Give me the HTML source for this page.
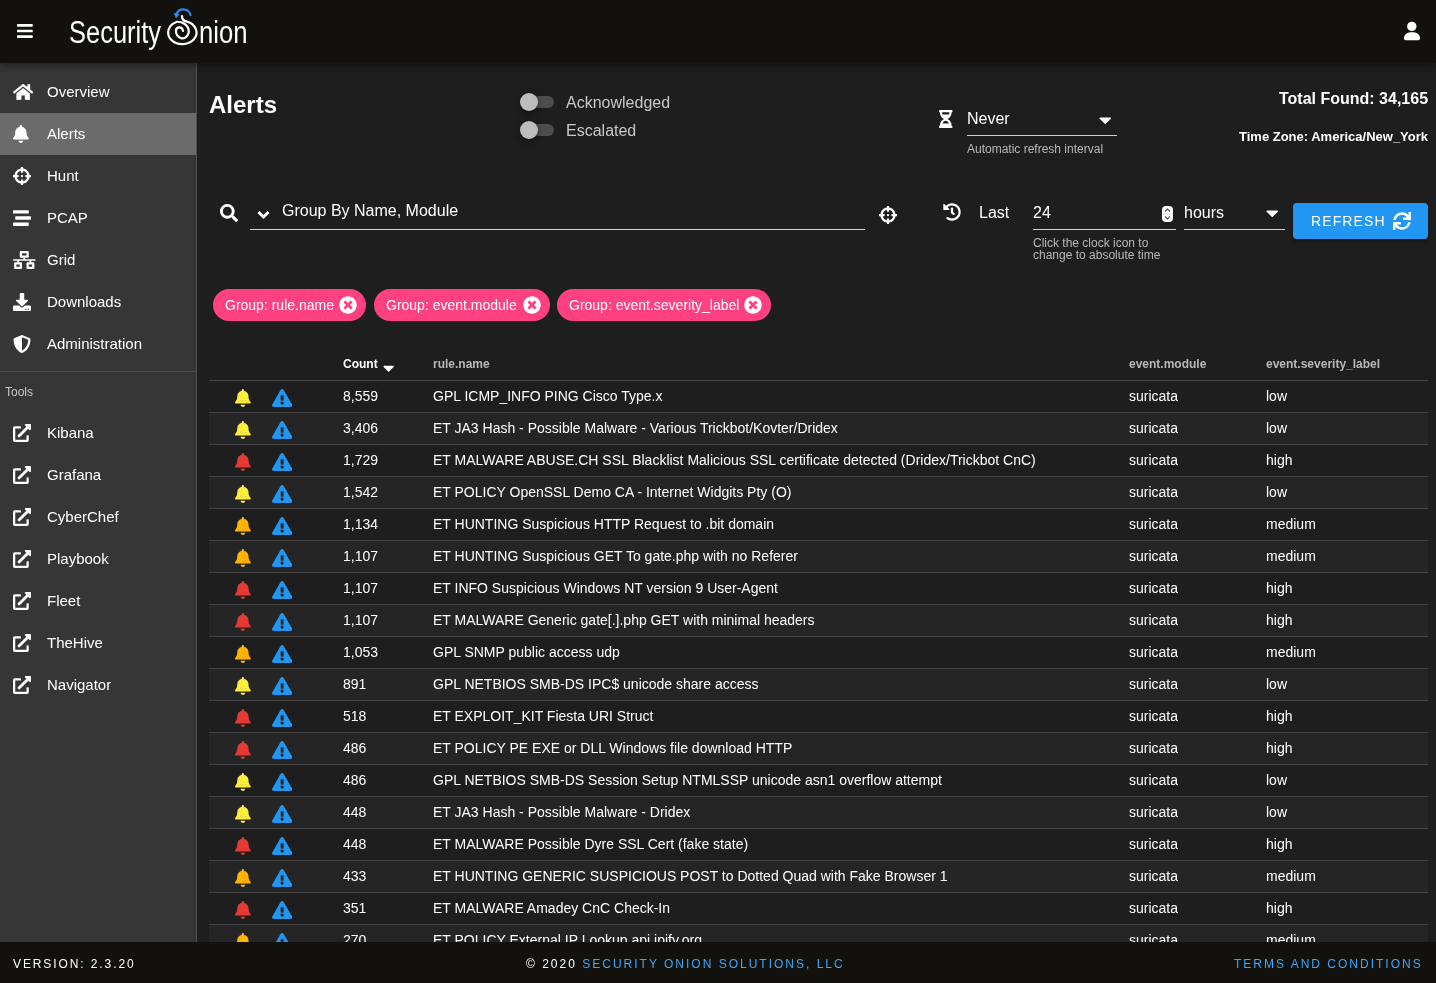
<!DOCTYPE html><html><head><meta charset="utf-8"><style>
*{box-sizing:border-box;margin:0;padding:0}
html,body{-webkit-font-smoothing:antialiased;width:1436px;height:983px;overflow:hidden;background:#1e1e1e;font-family:"Liberation Sans",sans-serif;color:#fff}
.t{position:absolute;white-space:nowrap;line-height:1;will-change:transform}
.ic{position:absolute;display:block;will-change:transform}
.bx{position:absolute}
</style></head><body>
<div class="bx" style="left:0;top:63px;width:196px;height:879px;background:#363636"></div>
<div class="bx" style="left:196px;top:63px;width:1px;height:879px;background:#4f4f4f"></div>
<div class="bx" style="left:0;top:113px;width:196px;height:42px;background:#6b6b6b"></div>
<div class="t" style="left:47px;top:84px;font-size:15px;color:#fff;font-weight:400;">Overview</div>
<svg class="ic" style="left:13px;top:83px;width:20.25px;height:18px;fill:#fff" viewBox="0 0 576 512" preserveAspectRatio="none"><path d="M280.37 148.26L96 300.11V464a16 16 0 0 0 16 16l112.06-.29a16 16 0 0 0 15.92-16V368a16 16 0 0 1 16-16h64a16 16 0 0 1 16 16v95.64a16 16 0 0 0 16 16.05L464 480a16 16 0 0 0 16-16V300L295.67 148.26a12.19 12.19 0 0 0-15.3 0zM571.6 251.47L488 182.56V44.05a12 12 0 0 0-12-12h-56a12 12 0 0 0-12 12v72.61L318.47 43a48 48 0 0 0-61 0L4.34 251.47a12 12 0 0 0-1.6 16.9l25.5 31A12 12 0 0 0 45.15 301l235.22-193.74a12.19 12.19 0 0 1 15.3 0L530.9 301a12 12 0 0 0 16.9-1.6l25.5-31a12 12 0 0 0-1.7-16.93z"/></svg>
<div class="t" style="left:47px;top:126px;font-size:15px;color:#fff;font-weight:400;">Alerts</div>
<svg class="ic" style="left:13px;top:125px;width:15.75px;height:18px;fill:#fff" viewBox="0 0 448 512" preserveAspectRatio="none"><path d="M224 512c35.32 0 63.97-28.65 63.97-64H160.03c0 35.35 28.65 64 63.97 64zm215.39-149.71c-19.32-20.76-55.47-51.99-55.47-154.29 0-77.7-54.48-139.9-127.94-155.16V32c0-17.67-14.32-32-31.98-32s-31.98 14.33-31.98 32v20.84C118.56 68.1 64.08 130.3 64.08 208c0 102.3-36.15 133.53-55.47 154.29-6 6.45-8.66 14.16-8.61 21.71.11 16.4 12.98 32 32.1 32h383.8c19.12 0 32-15.6 32.1-32 .05-7.55-2.61-15.27-8.61-21.71z"/></svg>
<div class="t" style="left:47px;top:168px;font-size:15px;color:#fff;font-weight:400;">Hunt</div>
<svg class="ic" style="left:13px;top:167px;width:18.00px;height:18px;fill:#fff" viewBox="0 0 512 512" preserveAspectRatio="none"><path d="M500 224h-30.364C455.724 130.325 381.675 56.276 288 42.364V12c0-6.627-5.373-12-12-12h-40c-6.627 0-12 5.373-12 12v30.364C130.325 56.276 56.276 130.325 42.364 224H12c-6.627 0-12 5.373-12 12v40c0 6.627 5.373 12 12 12h30.364C56.276 381.675 130.325 455.724 224 469.636V500c0 6.627 5.373 12 12 12h40c6.627 0 12-5.373 12-12v-30.364C381.675 455.724 455.724 381.675 469.636 288H500c6.627 0 12-5.373 12-12v-40c0-6.627-5.373-12-12-12zM288 404.634V364c0-6.627-5.373-12-12-12h-40c-6.627 0-12 5.373-12 12v40.634C165.826 392.232 119.783 346.243 107.366 288H148c6.627 0 12-5.373 12-12v-40c0-6.627-5.373-12-12-12h-40.634C119.768 165.826 165.757 119.783 224 107.366V148c0 6.627 5.373 12 12 12h40c6.627 0 12-5.373 12-12v-40.634C346.174 119.768 392.217 165.757 404.634 224H364c-6.627 0-12 5.373-12 12v40c0 6.627 5.373 12 12 12h40.634C392.232 346.174 346.243 392.217 288 404.634zM288 256c0 17.673-14.327 32-32 32s-32-14.327-32-32c0-17.673 14.327-32 32-32s32 14.327 32 32z"/></svg>
<div class="t" style="left:47px;top:210px;font-size:15px;color:#fff;font-weight:400;">PCAP</div>
<svg class="ic" style="left:13px;top:209px;width:18.00px;height:18px;fill:#fff" viewBox="0 0 512 512" preserveAspectRatio="none"><path d="M16 128h416c8.84 0 16-7.16 16-16V48c0-8.84-7.16-16-16-16H16C7.16 32 0 39.16 0 48v64c0 8.84 7.16 16 16 16zm480 80H80c-8.84 0-16 7.16-16 16v64c0 8.84 7.16 16 16 16h416c8.84 0 16-7.16 16-16v-64c0-8.840-7.16-16-16-16zm-64 176H16c-8.84 0-16 7.16-16 16v64c0 8.84 7.16 16 16 16h416c8.84 0 16-7.16 16-16v-64c0-8.84-7.16-16-16-16z"/></svg>
<div class="t" style="left:47px;top:252px;font-size:15px;color:#fff;font-weight:400;">Grid</div>
<svg class="ic" style="left:13px;top:251px;width:22.50px;height:18px;fill:#fff" viewBox="0 0 640 512" preserveAspectRatio="none"><path d="M640 264v-16c0-8.84-7.16-16-16-16H344v-40h72c17.67 0 32-14.33 32-32V32c0-17.67-14.33-32-32-32H224c-17.67 0-32 14.33-32 32v128c0 17.67 14.33 32 32 32h72v40H16c-8.84 0-16 7.16-16 16v16c0 8.84 7.16 16 16 16h104v40H64c-17.67 0-32 14.33-32 32v128c0 17.67 14.33 32 32 32h160c17.67 0 32-14.33 32-32V352c0-17.67-14.33-32-32-32h-56v-40h304v40h-56c-17.67 0-32 14.33-32 32v128c0 17.67 14.33 32 32 32h160c17.67 0 32-14.33 32-32V352c0-17.67-14.33-32-32-32h-56v-40h104c8.84 0 16-7.16 16-16zM256 128V64h128v64H256zm-64 320H96v-64h96v64zm352 0h-96v-64h96v64z"/></svg>
<div class="t" style="left:47px;top:294px;font-size:15px;color:#fff;font-weight:400;">Downloads</div>
<svg class="ic" style="left:13px;top:293px;width:18.00px;height:18px;fill:#fff" viewBox="0 0 512 512" preserveAspectRatio="none"><path d="M216 0h80c13.3 0 24 10.7 24 24v168h87.7c17.8 0 26.7 21.5 14.1 34.1L269.7 378.3c-7.5 7.5-19.8 7.5-27.3 0L90.1 226.1c-12.6-12.6-3.7-34.1 14.1-34.1H192V24c0-13.3 10.7-24 24-24zm296 376v112c0 13.3-10.7 24-24 24H24c-13.3 0-24-10.7-24-24V376c0-13.3 10.7-24 24-24h146.7l49 49c20.1 20.1 52.5 20.1 72.6 0l49-49H488c13.3 0 24 10.7 24 24zm-124 88c0-11-9-20-20-20s-20 9-20 20 9 20 20 20 20-9 20-20zm64 0c0-11-9-20-20-20s-20 9-20 20 9 20 20 20 20-9 20-20z"/></svg>
<div class="t" style="left:47px;top:336px;font-size:15px;color:#fff;font-weight:400;">Administration</div>
<svg class="ic" style="left:13px;top:335px;width:18.00px;height:18px;fill:#fff" viewBox="0 0 512 512" preserveAspectRatio="none"><path d="M466.5 83.7l-192-80a48.15 48.15 0 0 0-36.9 0l-192 80C27.7 91.1 16 108.6 16 128c0 198.5 114.5 335.7 221.5 380.3 11.8 4.9 25.1 4.9 36.9 0C360.1 472.6 496 349.3 496 128c0-19.4-11.7-36.9-29.5-44.3zM256.1 446.3l-.1-381 175.9 73.3c-3.3 151.4-82.1 261.1-175.8 307.7z"/></svg>
<div class="bx" style="left:0;top:371px;width:196px;height:1px;background:#4f4f4f"></div>
<div class="t" style="left:5px;top:386px;font-size:12px;color:#c8c8c8;font-weight:400;">Tools</div>
<div class="t" style="left:47px;top:425px;font-size:15px;color:#fff;font-weight:400;">Kibana</div>
<svg class="ic" style="left:13px;top:424px;width:18.00px;height:18px;fill:#fff" viewBox="0 0 512 512" preserveAspectRatio="none"><path d="M432 320h-32a16 16 0 0 0-16 16v112H64V128h144a16 16 0 0 0 16-16V80a16 16 0 0 0-16-16H48a48 48 0 0 0-48 48v352a48 48 0 0 0 48 48h352a48 48 0 0 0 48-48V336a16 16 0 0 0-16-16zM488 0H360c-21.37 0-32.05 25.91-17 41l35.73 35.73L135 320.37a24 24 0 0 0 0 34L157.670 377a24 24 0 0 0 34 0l243.610-243.680L471 169c15 15 41 4.5 41-17V24a24 24 0 0 0-24-24z"/></svg>
<div class="t" style="left:47px;top:467px;font-size:15px;color:#fff;font-weight:400;">Grafana</div>
<svg class="ic" style="left:13px;top:466px;width:18.00px;height:18px;fill:#fff" viewBox="0 0 512 512" preserveAspectRatio="none"><path d="M432 320h-32a16 16 0 0 0-16 16v112H64V128h144a16 16 0 0 0 16-16V80a16 16 0 0 0-16-16H48a48 48 0 0 0-48 48v352a48 48 0 0 0 48 48h352a48 48 0 0 0 48-48V336a16 16 0 0 0-16-16zM488 0H360c-21.37 0-32.05 25.91-17 41l35.73 35.73L135 320.37a24 24 0 0 0 0 34L157.670 377a24 24 0 0 0 34 0l243.610-243.680L471 169c15 15 41 4.5 41-17V24a24 24 0 0 0-24-24z"/></svg>
<div class="t" style="left:47px;top:509px;font-size:15px;color:#fff;font-weight:400;">CyberChef</div>
<svg class="ic" style="left:13px;top:508px;width:18.00px;height:18px;fill:#fff" viewBox="0 0 512 512" preserveAspectRatio="none"><path d="M432 320h-32a16 16 0 0 0-16 16v112H64V128h144a16 16 0 0 0 16-16V80a16 16 0 0 0-16-16H48a48 48 0 0 0-48 48v352a48 48 0 0 0 48 48h352a48 48 0 0 0 48-48V336a16 16 0 0 0-16-16zM488 0H360c-21.37 0-32.05 25.91-17 41l35.73 35.73L135 320.37a24 24 0 0 0 0 34L157.670 377a24 24 0 0 0 34 0l243.610-243.680L471 169c15 15 41 4.5 41-17V24a24 24 0 0 0-24-24z"/></svg>
<div class="t" style="left:47px;top:551px;font-size:15px;color:#fff;font-weight:400;">Playbook</div>
<svg class="ic" style="left:13px;top:550px;width:18.00px;height:18px;fill:#fff" viewBox="0 0 512 512" preserveAspectRatio="none"><path d="M432 320h-32a16 16 0 0 0-16 16v112H64V128h144a16 16 0 0 0 16-16V80a16 16 0 0 0-16-16H48a48 48 0 0 0-48 48v352a48 48 0 0 0 48 48h352a48 48 0 0 0 48-48V336a16 16 0 0 0-16-16zM488 0H360c-21.37 0-32.05 25.91-17 41l35.73 35.73L135 320.37a24 24 0 0 0 0 34L157.670 377a24 24 0 0 0 34 0l243.610-243.680L471 169c15 15 41 4.5 41-17V24a24 24 0 0 0-24-24z"/></svg>
<div class="t" style="left:47px;top:593px;font-size:15px;color:#fff;font-weight:400;">Fleet</div>
<svg class="ic" style="left:13px;top:592px;width:18.00px;height:18px;fill:#fff" viewBox="0 0 512 512" preserveAspectRatio="none"><path d="M432 320h-32a16 16 0 0 0-16 16v112H64V128h144a16 16 0 0 0 16-16V80a16 16 0 0 0-16-16H48a48 48 0 0 0-48 48v352a48 48 0 0 0 48 48h352a48 48 0 0 0 48-48V336a16 16 0 0 0-16-16zM488 0H360c-21.37 0-32.05 25.91-17 41l35.73 35.73L135 320.37a24 24 0 0 0 0 34L157.670 377a24 24 0 0 0 34 0l243.610-243.680L471 169c15 15 41 4.5 41-17V24a24 24 0 0 0-24-24z"/></svg>
<div class="t" style="left:47px;top:635px;font-size:15px;color:#fff;font-weight:400;">TheHive</div>
<svg class="ic" style="left:13px;top:634px;width:18.00px;height:18px;fill:#fff" viewBox="0 0 512 512" preserveAspectRatio="none"><path d="M432 320h-32a16 16 0 0 0-16 16v112H64V128h144a16 16 0 0 0 16-16V80a16 16 0 0 0-16-16H48a48 48 0 0 0-48 48v352a48 48 0 0 0 48 48h352a48 48 0 0 0 48-48V336a16 16 0 0 0-16-16zM488 0H360c-21.37 0-32.05 25.91-17 41l35.73 35.73L135 320.37a24 24 0 0 0 0 34L157.670 377a24 24 0 0 0 34 0l243.610-243.680L471 169c15 15 41 4.5 41-17V24a24 24 0 0 0-24-24z"/></svg>
<div class="t" style="left:47px;top:677px;font-size:15px;color:#fff;font-weight:400;">Navigator</div>
<svg class="ic" style="left:13px;top:676px;width:18.00px;height:18px;fill:#fff" viewBox="0 0 512 512" preserveAspectRatio="none"><path d="M432 320h-32a16 16 0 0 0-16 16v112H64V128h144a16 16 0 0 0 16-16V80a16 16 0 0 0-16-16H48a48 48 0 0 0-48 48v352a48 48 0 0 0 48 48h352a48 48 0 0 0 48-48V336a16 16 0 0 0-16-16zM488 0H360c-21.37 0-32.05 25.91-17 41l35.73 35.73L135 320.37a24 24 0 0 0 0 34L157.670 377a24 24 0 0 0 34 0l243.610-243.680L471 169c15 15 41 4.5 41-17V24a24 24 0 0 0-24-24z"/></svg>
<div class="t" style="left:209px;top:93px;font-size:24px;color:#fff;font-weight:700;">Alerts</div>
<div class="bx" style="left:521px;top:96px;width:33px;height:12px;border-radius:6px;background:#4d4d4d"></div>
<div class="bx" style="left:520px;top:93px;width:18px;height:18px;border-radius:50%;background:#bdbdbd;box-shadow:0 2px 4px -1px rgba(0,0,0,.2),0 4px 5px 0 rgba(0,0,0,.14),0 1px 10px 0 rgba(0,0,0,.12)"></div>
<div class="t" style="left:566px;top:95px;font-size:16px;color:#c8c8c8;font-weight:400;">Acknowledged</div>
<div class="bx" style="left:521px;top:124px;width:33px;height:12px;border-radius:6px;background:#4d4d4d"></div>
<div class="bx" style="left:520px;top:121px;width:18px;height:18px;border-radius:50%;background:#bdbdbd;box-shadow:0 2px 4px -1px rgba(0,0,0,.2),0 4px 5px 0 rgba(0,0,0,.14),0 1px 10px 0 rgba(0,0,0,.12)"></div>
<div class="t" style="left:566px;top:123px;font-size:16px;color:#c8c8c8;font-weight:400;">Escalated</div>
<svg class="ic" style="left:939px;top:110px;width:13.50px;height:18px;fill:#fff" viewBox="0 0 384 512" preserveAspectRatio="none"><path d="M360 0H24C10.745 0 0 10.745 0 24v16c0 13.255 10.745 24 24 24 0 90.965 51.016 167.734 120.842 192C75.016 280.266 24 357.035 24 448c-13.255 0-24 10.745-24 24v16c0 13.255 10.745 24 24 24h336c13.255 0 24-10.745 24-24v-16c0-13.255-10.745-24-24-24 0-90.965-51.016-167.734-120.842-192C308.984 231.734 360 154.965 360 64c13.255 0 24-10.745 24-24V24c0-13.255-10.745-24-24-24zm-75.078 384H99.08c17.059-46.797 52.096-80 92.92-80 40.821 0 75.862 33.196 92.922 80zm.019-256H99.078C91.988 108.548 88 86.748 88 64h208c0 22.805-3.987 44.587-11.059 64z"/></svg>
<div class="t" style="left:967px;top:111px;font-size:16px;color:#fff;font-weight:400;">Never</div>
<svg class="ic" style="left:1099px;top:109.5px;width:12.50px;height:20px;fill:#fff" viewBox="0 0 320 512" preserveAspectRatio="none"><path d="M31.3 192h257.3c17.8 0 26.7 21.5 14.1 34.1L174.1 354.8c-7.8 7.8-20.5 7.8-28.3 0L17.2 226.1C4.6 213.5 13.5 192 31.3 192z"/></svg>
<div class="bx" style="left:967px;top:135px;width:150px;height:1px;background:#d0d0d0"></div>
<div class="t" style="left:967px;top:143px;font-size:12px;color:#b8b8b8;font-weight:400;">Automatic refresh interval</div>
<div class="t" style="right:8px;top:91px;font-size:16px;font-weight:700;color:#fff">Total Found: 34,165</div>
<div class="t" style="right:8px;top:130px;font-size:13px;font-weight:700;color:#fff">Time Zone: America/New_York</div>
<svg class="ic" style="left:220px;top:204px;width:18.00px;height:18px;fill:#fff" viewBox="0 0 512 512" preserveAspectRatio="none"><path d="M505 442.7L405.3 343c-4.5-4.5-10.6-7-17-7H372c27.6-35.3 44-79.7 44-128C416 93.1 322.9 0 208 0S0 93.1 0 208s93.1 208 208 208c48.3 0 92.7-16.4 128-44v16.3c0 6.4 2.5 12.5 7 17l99.7 99.7c9.4 9.4 24.6 9.4 33.9 0l28.3-28.3c9.4-9.4 9.4-24.6.1-34zM208 336c-70.7 0-128-57.2-128-128 0-70.7 57.2-128 128-128 70.7 0 128 57.2 128 128 0 70.7-57.2 128-128 128z"/></svg>
<svg class="ic" style="left:257px;top:210px;width:13px;height:10px" viewBox="0 0 13 10"><path d="M1.5 2 L6.5 7 L11.5 2" stroke="#fff" stroke-width="3" fill="none"/></svg>
<div class="t" style="left:282px;top:203px;font-size:16px;color:#fff;font-weight:400;">Group By Name, Module</div>
<div class="bx" style="left:250px;top:229px;width:615px;height:1px;background:#d0d0d0"></div>
<svg class="ic" style="left:879px;top:206px;width:18.00px;height:18px;fill:#fff" viewBox="0 0 512 512" preserveAspectRatio="none"><path d="M500 224h-30.364C455.724 130.325 381.675 56.276 288 42.364V12c0-6.627-5.373-12-12-12h-40c-6.627 0-12 5.373-12 12v30.364C130.325 56.276 56.276 130.325 42.364 224H12c-6.627 0-12 5.373-12 12v40c0 6.627 5.373 12 12 12h30.364C56.276 381.675 130.325 455.724 224 469.636V500c0 6.627 5.373 12 12 12h40c6.627 0 12-5.373 12-12v-30.364C381.675 455.724 455.724 381.675 469.636 288H500c6.627 0 12-5.373 12-12v-40c0-6.627-5.373-12-12-12zM288 404.634V364c0-6.627-5.373-12-12-12h-40c-6.627 0-12 5.373-12 12v40.634C165.826 392.232 119.783 346.243 107.366 288H148c6.627 0 12-5.373 12-12v-40c0-6.627-5.373-12-12-12h-40.634C119.768 165.826 165.757 119.783 224 107.366V148c0 6.627 5.373 12 12 12h40c6.627 0 12-5.373 12-12v-40.634C346.174 119.768 392.217 165.757 404.634 224H364c-6.627 0-12 5.373-12 12v40c0 6.627 5.373 12 12 12h40.634C392.232 346.174 346.243 392.217 288 404.634zM288 256c0 17.673-14.327 32-32 32s-32-14.327-32-32c0-17.673 14.327-32 32-32s32 14.327 32 32z"/></svg>
<svg class="ic" style="left:943px;top:202.5px;width:18.00px;height:18px;fill:#fff" viewBox="0 0 512 512" preserveAspectRatio="none"><path d="M504 255.531c.253 136.64-111.18 248.372-247.82 248.468-59.015.042-113.223-20.53-155.822-54.911-11.077-8.94-11.905-25.541-1.839-35.607l11.267-11.267c8.609-8.609 22.353-9.551 31.891-1.984C173.062 425.135 212.781 440 256 440c101.705 0 184-82.311 184-184 0-101.705-82.311-184-184-184-48.814 0-93.149 18.969-126.068 49.932l50.754 50.754c10.08 10.08 2.941 27.314-11.313 27.314H24c-8.837 0-16-7.163-16-16V38.627c0-14.254 17.234-21.393 27.314-11.314l49.372 49.372C129.209 34.136 189.552 8 256 8c136.81 0 247.747 110.78 248 247.531zm-180.912 78.784l9.823-12.63c8.138-10.463 6.253-25.542-4.21-33.679L288 256.349V152c0-13.255-10.745-24-24-24h-16c-13.255 0-24 10.745-24 24v135.651l65.409 50.874c10.463 8.137 25.541 6.253 33.679-4.21z"/></svg>
<div class="t" style="left:979px;top:205px;font-size:16px;color:#fff;font-weight:400;">Last</div>
<div class="t" style="left:1033px;top:205px;font-size:16px;color:#fff;font-weight:400;">24</div>
<div class="bx" style="left:1033px;top:229px;width:143px;height:1px;background:#d0d0d0"></div>
<div class="bx" style="left:1162px;top:206px;width:11px;height:16px;border-radius:4px;background:#fff"></div>
<svg class="ic" style="left:1162px;top:206px;width:11px;height:16px" viewBox="0 0 11 16" fill="none" stroke="#555" stroke-width="1.2"><path d="M3 5.5 L5.5 3 L8 5.5 M3 10.5 L5.5 13 L8 10.5"/><rect x="1" y="7.3" width="9" height="1.4" fill="#ddd" stroke="none"/></svg>
<div class="t" style="left:1033px;top:237px;font-size:12px;color:#b8b8b8;font-weight:400;">Click the clock icon to</div>
<div class="t" style="left:1033px;top:249px;font-size:12px;color:#b8b8b8;font-weight:400;">change to absolute time</div>
<div class="t" style="left:1184px;top:205px;font-size:16px;color:#fff;font-weight:400;">hours</div>
<svg class="ic" style="left:1266px;top:203px;width:12.50px;height:20px;fill:#fff" viewBox="0 0 320 512" preserveAspectRatio="none"><path d="M31.3 192h257.3c17.8 0 26.7 21.5 14.1 34.1L174.1 354.8c-7.8 7.8-20.5 7.8-28.3 0L17.2 226.1C4.6 213.5 13.5 192 31.3 192z"/></svg>
<div class="bx" style="left:1184px;top:229px;width:101px;height:1px;background:#d0d0d0"></div>
<div class="bx" style="left:1293px;top:203px;width:135px;height:36px;border-radius:4px;background:#2196f3;box-shadow:0 3px 1px -2px rgba(0,0,0,.2),0 2px 2px 0 rgba(0,0,0,.14),0 1px 5px 0 rgba(0,0,0,.12)"></div>
<div class="t" style="left:1311px;top:214px;font-size:14px;color:#fff;font-weight:400;letter-spacing:1.1px">REFRESH</div>
<svg class="ic" style="left:1392.8px;top:212.2px;width:18.00px;height:18px;fill:#fff" viewBox="0 0 512 512" preserveAspectRatio="none"><path d="M440.65 12.57l4 82.77A247.16 247.16 0 0 0 255.83 8C134.73 8 33.91 94.92 12.29 209.82A12 12 0 0 0 24.09 224h49.05a12 12 0 0 0 11.67-9.26 175.91 175.91 0 0 1 317-56.94l-101.46-4.86a12 12 0 0 0-12.57 12v47.41a12 12 0 0 0 12 12H500a12 12 0 0 0 12-12V12a12 12 0 0 0-12-12h-47.37a12 12 0 0 0-11.98 12.57zM255.83 432a175.61 175.61 0 0 1-146-77.8l101.8 4.87a12 12 0 0 0 12.57-12v-47.4a12 12 0 0 0-12-12H12a12 12 0 0 0-12 12V500a12 12 0 0 0 12 12h47.35a12 12 0 0 0 12-12.6l-4.150-82.57A247.17 247.17 0 0 0 255.830 504c121.110 0 221.930-86.920 243.550-201.820a12 12 0 0 0-11.800-14.180h-49.050a12 12 0 0 0-11.670 9.260A175.860 175.860 0 0 1 255.830 432z"/></svg>
<div class="bx" style="left:213px;top:289px;width:153px;height:32px;border-radius:16px;background:#ff4081"></div>
<div class="t" style="left:225px;top:298px;font-size:14px;color:#fff;font-weight:400;">Group: rule.name</div>
<svg class="ic" style="left:339px;top:296px;width:18.00px;height:18px;fill:#fff" viewBox="0 0 512 512" preserveAspectRatio="none"><path d="M256 8C119 8 8 119 8 256s111 248 248 248 248-111 248-248S393 8 256 8zm121.6 313.1c4.7 4.7 4.7 12.3 0 17L338 377.6c-4.7 4.7-12.3 4.7-17 0L256 312l-65.1 65.6c-4.7 4.7-12.3 4.7-17 0L134.4 338c-4.7-4.7-4.7-12.3 0-17l65.6-65-65.6-65.1c-4.7-4.7-4.7-12.3 0-17l39.6-39.6c4.7-4.7 12.3-4.7 17 0l65 65.7 65.1-65.6c4.7-4.7 12.3-4.7 17 0l39.6 39.6c4.7 4.7 4.7 12.3 0 17L312 256l65.6 65.1z"/></svg>
<div class="bx" style="left:374px;top:289px;width:176px;height:32px;border-radius:16px;background:#ff4081"></div>
<div class="t" style="left:386px;top:298px;font-size:14px;color:#fff;font-weight:400;">Group: event.module</div>
<svg class="ic" style="left:523px;top:296px;width:18.00px;height:18px;fill:#fff" viewBox="0 0 512 512" preserveAspectRatio="none"><path d="M256 8C119 8 8 119 8 256s111 248 248 248 248-111 248-248S393 8 256 8zm121.6 313.1c4.7 4.7 4.7 12.3 0 17L338 377.6c-4.7 4.7-12.3 4.7-17 0L256 312l-65.1 65.6c-4.7 4.7-12.3 4.7-17 0L134.4 338c-4.7-4.7-4.7-12.3 0-17l65.6-65-65.6-65.1c-4.7-4.7-4.7-12.3 0-17l39.6-39.6c4.7-4.7 12.3-4.7 17 0l65 65.7 65.1-65.6c4.7-4.7 12.3-4.7 17 0l39.6 39.6c4.7 4.7 4.7 12.3 0 17L312 256l65.6 65.1z"/></svg>
<div class="bx" style="left:557px;top:289px;width:214px;height:32px;border-radius:16px;background:#ff4081"></div>
<div class="t" style="left:569px;top:298px;font-size:14px;color:#fff;font-weight:400;">Group: event.severity_label</div>
<svg class="ic" style="left:744px;top:296px;width:18.00px;height:18px;fill:#fff" viewBox="0 0 512 512" preserveAspectRatio="none"><path d="M256 8C119 8 8 119 8 256s111 248 248 248 248-111 248-248S393 8 256 8zm121.6 313.1c4.7 4.7 4.7 12.3 0 17L338 377.6c-4.7 4.7-12.3 4.7-17 0L256 312l-65.1 65.6c-4.7 4.7-12.3 4.7-17 0L134.4 338c-4.7-4.7-4.7-12.3 0-17l65.6-65-65.6-65.1c-4.7-4.7-4.7-12.3 0-17l39.6-39.6c4.7-4.7 12.3-4.7 17 0l65 65.7 65.1-65.6c4.7-4.7 12.3-4.7 17 0l39.6 39.6c4.7 4.7 4.7 12.3 0 17L312 256l65.6 65.1z"/></svg>
<div class="t" style="left:343px;top:358px;font-size:12px;color:#fff;font-weight:700;">Count</div>
<svg class="ic" style="left:383px;top:359px;width:11.25px;height:18px;fill:#fff" viewBox="0 0 320 512" preserveAspectRatio="none"><path d="M31.3 192h257.3c17.8 0 26.7 21.5 14.1 34.1L174.1 354.8c-7.8 7.8-20.5 7.8-28.3 0L17.2 226.1C4.6 213.5 13.5 192 31.3 192z"/></svg>
<div class="t" style="left:433px;top:358px;font-size:12px;color:#b8b8b8;font-weight:700;">rule.name</div>
<div class="t" style="left:1129px;top:358px;font-size:12px;color:#b8b8b8;font-weight:700;">event.module</div>
<div class="t" style="left:1266px;top:358px;font-size:12px;color:#b8b8b8;font-weight:700;">event.severity_label</div>
<div class="bx" style="left:209px;top:380px;width:1219px;height:1px;background:#444"></div>
<div class="bx" style="left:209px;top:412px;width:1219px;height:1px;background:#444"></div>
<svg class="ic" style="left:235px;top:388.5px;width:15.75px;height:18px;fill:#ffeb3b" viewBox="0 0 448 512" preserveAspectRatio="none"><path d="M224 512c35.32 0 63.97-28.65 63.97-64H160.03c0 35.35 28.65 64 63.97 64zm215.39-149.71c-19.32-20.76-55.47-51.99-55.47-154.29 0-77.7-54.48-139.9-127.94-155.16V32c0-17.67-14.32-32-31.98-32s-31.98 14.33-31.98 32v20.84C118.56 68.1 64.08 130.3 64.08 208c0 102.3-36.15 133.53-55.47 154.29-6 6.45-8.66 14.16-8.61 21.71.11 16.4 12.98 32 32.1 32h383.8c19.12 0 32-15.6 32.1-32 .05-7.55-2.61-15.27-8.61-21.71z"/></svg>
<svg class="ic" style="left:272px;top:388.5px;width:20.25px;height:18px;fill:#2196f3" viewBox="0 0 576 512" preserveAspectRatio="none"><path d="M569.517 440.013C587.975 472.007 564.806 512 527.94 512H48.054c-36.937 0-59.999-40.055-41.577-71.987L246.423 23.985c18.467-32.009 64.72-31.951 83.154 0l239.94 416.028zM288 354c-25.405 0-46 20.595-46 46s20.595 46 46 46 46-20.595 46-46-20.595-46-46-46zm-43.673-165.346l7.418 136c.347 6.364 5.609 11.346 11.982 11.346h48.546c6.373 0 11.635-4.982 11.982-11.346l7.418-136c.375-6.874-5.098-12.654-11.982-12.654h-63.383c-6.884 0-12.356 5.78-11.981 12.654z"/></svg>
<div class="t" style="left:343px;top:389px;font-size:14px;color:#fff;font-weight:400;">8,559</div>
<div class="t" style="left:433px;top:389px;font-size:14px;color:#fff;font-weight:400;">GPL ICMP_INFO PING Cisco Type.x</div>
<div class="t" style="left:1129px;top:389px;font-size:14px;color:#fff;font-weight:400;">suricata</div>
<div class="t" style="left:1266px;top:389px;font-size:14px;color:#fff;font-weight:400;">low</div>
<div class="bx" style="left:209px;top:413px;width:1219px;height:31px;background:#252525"></div>
<div class="bx" style="left:209px;top:444px;width:1219px;height:1px;background:#444"></div>
<svg class="ic" style="left:235px;top:420.5px;width:15.75px;height:18px;fill:#ffeb3b" viewBox="0 0 448 512" preserveAspectRatio="none"><path d="M224 512c35.32 0 63.97-28.65 63.97-64H160.03c0 35.35 28.65 64 63.97 64zm215.39-149.71c-19.32-20.76-55.47-51.99-55.47-154.29 0-77.7-54.48-139.9-127.94-155.16V32c0-17.67-14.32-32-31.98-32s-31.98 14.33-31.98 32v20.84C118.56 68.1 64.08 130.3 64.08 208c0 102.3-36.15 133.53-55.47 154.29-6 6.45-8.66 14.16-8.61 21.71.11 16.4 12.98 32 32.1 32h383.8c19.12 0 32-15.6 32.1-32 .05-7.55-2.61-15.27-8.61-21.71z"/></svg>
<svg class="ic" style="left:272px;top:420.5px;width:20.25px;height:18px;fill:#2196f3" viewBox="0 0 576 512" preserveAspectRatio="none"><path d="M569.517 440.013C587.975 472.007 564.806 512 527.94 512H48.054c-36.937 0-59.999-40.055-41.577-71.987L246.423 23.985c18.467-32.009 64.72-31.951 83.154 0l239.94 416.028zM288 354c-25.405 0-46 20.595-46 46s20.595 46 46 46 46-20.595 46-46-20.595-46-46-46zm-43.673-165.346l7.418 136c.347 6.364 5.609 11.346 11.982 11.346h48.546c6.373 0 11.635-4.982 11.982-11.346l7.418-136c.375-6.874-5.098-12.654-11.982-12.654h-63.383c-6.884 0-12.356 5.78-11.981 12.654z"/></svg>
<div class="t" style="left:343px;top:421px;font-size:14px;color:#fff;font-weight:400;">3,406</div>
<div class="t" style="left:433px;top:421px;font-size:14px;color:#fff;font-weight:400;">ET JA3 Hash - Possible Malware - Various Trickbot/Kovter/Dridex</div>
<div class="t" style="left:1129px;top:421px;font-size:14px;color:#fff;font-weight:400;">suricata</div>
<div class="t" style="left:1266px;top:421px;font-size:14px;color:#fff;font-weight:400;">low</div>
<div class="bx" style="left:209px;top:476px;width:1219px;height:1px;background:#444"></div>
<svg class="ic" style="left:235px;top:452.5px;width:15.75px;height:18px;fill:#e53935" viewBox="0 0 448 512" preserveAspectRatio="none"><path d="M224 512c35.32 0 63.97-28.65 63.97-64H160.03c0 35.35 28.65 64 63.97 64zm215.39-149.71c-19.32-20.76-55.47-51.99-55.47-154.29 0-77.7-54.48-139.9-127.94-155.16V32c0-17.67-14.32-32-31.98-32s-31.98 14.33-31.98 32v20.84C118.56 68.1 64.08 130.3 64.08 208c0 102.3-36.15 133.53-55.47 154.29-6 6.45-8.66 14.16-8.61 21.71.11 16.4 12.98 32 32.1 32h383.8c19.12 0 32-15.6 32.1-32 .05-7.55-2.61-15.27-8.61-21.71z"/></svg>
<svg class="ic" style="left:272px;top:452.5px;width:20.25px;height:18px;fill:#2196f3" viewBox="0 0 576 512" preserveAspectRatio="none"><path d="M569.517 440.013C587.975 472.007 564.806 512 527.94 512H48.054c-36.937 0-59.999-40.055-41.577-71.987L246.423 23.985c18.467-32.009 64.72-31.951 83.154 0l239.94 416.028zM288 354c-25.405 0-46 20.595-46 46s20.595 46 46 46 46-20.595 46-46-20.595-46-46-46zm-43.673-165.346l7.418 136c.347 6.364 5.609 11.346 11.982 11.346h48.546c6.373 0 11.635-4.982 11.982-11.346l7.418-136c.375-6.874-5.098-12.654-11.982-12.654h-63.383c-6.884 0-12.356 5.78-11.981 12.654z"/></svg>
<div class="t" style="left:343px;top:453px;font-size:14px;color:#fff;font-weight:400;">1,729</div>
<div class="t" style="left:433px;top:453px;font-size:14px;color:#fff;font-weight:400;">ET MALWARE ABUSE.CH SSL Blacklist Malicious SSL certificate detected (Dridex/Trickbot CnC)</div>
<div class="t" style="left:1129px;top:453px;font-size:14px;color:#fff;font-weight:400;">suricata</div>
<div class="t" style="left:1266px;top:453px;font-size:14px;color:#fff;font-weight:400;">high</div>
<div class="bx" style="left:209px;top:477px;width:1219px;height:31px;background:#252525"></div>
<div class="bx" style="left:209px;top:508px;width:1219px;height:1px;background:#444"></div>
<svg class="ic" style="left:235px;top:484.5px;width:15.75px;height:18px;fill:#ffeb3b" viewBox="0 0 448 512" preserveAspectRatio="none"><path d="M224 512c35.32 0 63.97-28.65 63.97-64H160.03c0 35.35 28.65 64 63.97 64zm215.39-149.71c-19.32-20.76-55.47-51.99-55.47-154.29 0-77.7-54.48-139.9-127.94-155.16V32c0-17.67-14.32-32-31.98-32s-31.98 14.33-31.98 32v20.84C118.56 68.1 64.08 130.3 64.08 208c0 102.3-36.15 133.53-55.47 154.29-6 6.45-8.66 14.16-8.61 21.71.11 16.4 12.98 32 32.1 32h383.8c19.12 0 32-15.6 32.1-32 .05-7.55-2.61-15.27-8.61-21.71z"/></svg>
<svg class="ic" style="left:272px;top:484.5px;width:20.25px;height:18px;fill:#2196f3" viewBox="0 0 576 512" preserveAspectRatio="none"><path d="M569.517 440.013C587.975 472.007 564.806 512 527.94 512H48.054c-36.937 0-59.999-40.055-41.577-71.987L246.423 23.985c18.467-32.009 64.72-31.951 83.154 0l239.94 416.028zM288 354c-25.405 0-46 20.595-46 46s20.595 46 46 46 46-20.595 46-46-20.595-46-46-46zm-43.673-165.346l7.418 136c.347 6.364 5.609 11.346 11.982 11.346h48.546c6.373 0 11.635-4.982 11.982-11.346l7.418-136c.375-6.874-5.098-12.654-11.982-12.654h-63.383c-6.884 0-12.356 5.78-11.981 12.654z"/></svg>
<div class="t" style="left:343px;top:485px;font-size:14px;color:#fff;font-weight:400;">1,542</div>
<div class="t" style="left:433px;top:485px;font-size:14px;color:#fff;font-weight:400;">ET POLICY OpenSSL Demo CA - Internet Widgits Pty (O)</div>
<div class="t" style="left:1129px;top:485px;font-size:14px;color:#fff;font-weight:400;">suricata</div>
<div class="t" style="left:1266px;top:485px;font-size:14px;color:#fff;font-weight:400;">low</div>
<div class="bx" style="left:209px;top:540px;width:1219px;height:1px;background:#444"></div>
<svg class="ic" style="left:235px;top:516.5px;width:15.75px;height:18px;fill:#ffb300" viewBox="0 0 448 512" preserveAspectRatio="none"><path d="M224 512c35.32 0 63.97-28.65 63.97-64H160.03c0 35.35 28.65 64 63.97 64zm215.39-149.71c-19.32-20.76-55.47-51.99-55.47-154.29 0-77.7-54.48-139.9-127.94-155.16V32c0-17.67-14.32-32-31.98-32s-31.98 14.33-31.98 32v20.84C118.56 68.1 64.08 130.3 64.08 208c0 102.3-36.15 133.53-55.47 154.29-6 6.45-8.66 14.16-8.61 21.71.11 16.4 12.98 32 32.1 32h383.8c19.12 0 32-15.6 32.1-32 .05-7.55-2.61-15.27-8.61-21.71z"/></svg>
<svg class="ic" style="left:272px;top:516.5px;width:20.25px;height:18px;fill:#2196f3" viewBox="0 0 576 512" preserveAspectRatio="none"><path d="M569.517 440.013C587.975 472.007 564.806 512 527.94 512H48.054c-36.937 0-59.999-40.055-41.577-71.987L246.423 23.985c18.467-32.009 64.72-31.951 83.154 0l239.94 416.028zM288 354c-25.405 0-46 20.595-46 46s20.595 46 46 46 46-20.595 46-46-20.595-46-46-46zm-43.673-165.346l7.418 136c.347 6.364 5.609 11.346 11.982 11.346h48.546c6.373 0 11.635-4.982 11.982-11.346l7.418-136c.375-6.874-5.098-12.654-11.982-12.654h-63.383c-6.884 0-12.356 5.78-11.981 12.654z"/></svg>
<div class="t" style="left:343px;top:517px;font-size:14px;color:#fff;font-weight:400;">1,134</div>
<div class="t" style="left:433px;top:517px;font-size:14px;color:#fff;font-weight:400;">ET HUNTING Suspicious HTTP Request to .bit domain</div>
<div class="t" style="left:1129px;top:517px;font-size:14px;color:#fff;font-weight:400;">suricata</div>
<div class="t" style="left:1266px;top:517px;font-size:14px;color:#fff;font-weight:400;">medium</div>
<div class="bx" style="left:209px;top:541px;width:1219px;height:31px;background:#252525"></div>
<div class="bx" style="left:209px;top:572px;width:1219px;height:1px;background:#444"></div>
<svg class="ic" style="left:235px;top:548.5px;width:15.75px;height:18px;fill:#ffb300" viewBox="0 0 448 512" preserveAspectRatio="none"><path d="M224 512c35.32 0 63.97-28.65 63.97-64H160.03c0 35.35 28.65 64 63.97 64zm215.39-149.71c-19.32-20.76-55.47-51.99-55.47-154.29 0-77.7-54.48-139.9-127.94-155.16V32c0-17.67-14.32-32-31.98-32s-31.98 14.33-31.98 32v20.84C118.56 68.1 64.08 130.3 64.08 208c0 102.3-36.15 133.53-55.47 154.29-6 6.45-8.66 14.16-8.61 21.71.11 16.4 12.98 32 32.1 32h383.8c19.12 0 32-15.6 32.1-32 .05-7.55-2.61-15.27-8.61-21.71z"/></svg>
<svg class="ic" style="left:272px;top:548.5px;width:20.25px;height:18px;fill:#2196f3" viewBox="0 0 576 512" preserveAspectRatio="none"><path d="M569.517 440.013C587.975 472.007 564.806 512 527.94 512H48.054c-36.937 0-59.999-40.055-41.577-71.987L246.423 23.985c18.467-32.009 64.72-31.951 83.154 0l239.94 416.028zM288 354c-25.405 0-46 20.595-46 46s20.595 46 46 46 46-20.595 46-46-20.595-46-46-46zm-43.673-165.346l7.418 136c.347 6.364 5.609 11.346 11.982 11.346h48.546c6.373 0 11.635-4.982 11.982-11.346l7.418-136c.375-6.874-5.098-12.654-11.982-12.654h-63.383c-6.884 0-12.356 5.78-11.981 12.654z"/></svg>
<div class="t" style="left:343px;top:549px;font-size:14px;color:#fff;font-weight:400;">1,107</div>
<div class="t" style="left:433px;top:549px;font-size:14px;color:#fff;font-weight:400;">ET HUNTING Suspicious GET To gate.php with no Referer</div>
<div class="t" style="left:1129px;top:549px;font-size:14px;color:#fff;font-weight:400;">suricata</div>
<div class="t" style="left:1266px;top:549px;font-size:14px;color:#fff;font-weight:400;">medium</div>
<div class="bx" style="left:209px;top:604px;width:1219px;height:1px;background:#444"></div>
<svg class="ic" style="left:235px;top:580.5px;width:15.75px;height:18px;fill:#e53935" viewBox="0 0 448 512" preserveAspectRatio="none"><path d="M224 512c35.32 0 63.97-28.65 63.97-64H160.03c0 35.35 28.65 64 63.97 64zm215.39-149.71c-19.32-20.76-55.47-51.99-55.47-154.29 0-77.7-54.48-139.9-127.94-155.16V32c0-17.67-14.32-32-31.98-32s-31.98 14.33-31.98 32v20.84C118.56 68.1 64.08 130.3 64.08 208c0 102.3-36.15 133.53-55.47 154.29-6 6.45-8.66 14.16-8.61 21.71.11 16.4 12.98 32 32.1 32h383.8c19.12 0 32-15.6 32.1-32 .05-7.55-2.61-15.27-8.61-21.71z"/></svg>
<svg class="ic" style="left:272px;top:580.5px;width:20.25px;height:18px;fill:#2196f3" viewBox="0 0 576 512" preserveAspectRatio="none"><path d="M569.517 440.013C587.975 472.007 564.806 512 527.94 512H48.054c-36.937 0-59.999-40.055-41.577-71.987L246.423 23.985c18.467-32.009 64.72-31.951 83.154 0l239.94 416.028zM288 354c-25.405 0-46 20.595-46 46s20.595 46 46 46 46-20.595 46-46-20.595-46-46-46zm-43.673-165.346l7.418 136c.347 6.364 5.609 11.346 11.982 11.346h48.546c6.373 0 11.635-4.982 11.982-11.346l7.418-136c.375-6.874-5.098-12.654-11.982-12.654h-63.383c-6.884 0-12.356 5.78-11.981 12.654z"/></svg>
<div class="t" style="left:343px;top:581px;font-size:14px;color:#fff;font-weight:400;">1,107</div>
<div class="t" style="left:433px;top:581px;font-size:14px;color:#fff;font-weight:400;">ET INFO Suspicious Windows NT version 9 User-Agent</div>
<div class="t" style="left:1129px;top:581px;font-size:14px;color:#fff;font-weight:400;">suricata</div>
<div class="t" style="left:1266px;top:581px;font-size:14px;color:#fff;font-weight:400;">high</div>
<div class="bx" style="left:209px;top:605px;width:1219px;height:31px;background:#252525"></div>
<div class="bx" style="left:209px;top:636px;width:1219px;height:1px;background:#444"></div>
<svg class="ic" style="left:235px;top:612.5px;width:15.75px;height:18px;fill:#e53935" viewBox="0 0 448 512" preserveAspectRatio="none"><path d="M224 512c35.32 0 63.97-28.65 63.97-64H160.03c0 35.35 28.65 64 63.97 64zm215.39-149.71c-19.32-20.76-55.47-51.99-55.47-154.29 0-77.7-54.48-139.9-127.94-155.16V32c0-17.67-14.32-32-31.98-32s-31.98 14.33-31.98 32v20.84C118.56 68.1 64.08 130.3 64.08 208c0 102.3-36.15 133.53-55.47 154.29-6 6.45-8.66 14.16-8.61 21.71.11 16.4 12.98 32 32.1 32h383.8c19.12 0 32-15.6 32.1-32 .05-7.55-2.61-15.27-8.61-21.71z"/></svg>
<svg class="ic" style="left:272px;top:612.5px;width:20.25px;height:18px;fill:#2196f3" viewBox="0 0 576 512" preserveAspectRatio="none"><path d="M569.517 440.013C587.975 472.007 564.806 512 527.94 512H48.054c-36.937 0-59.999-40.055-41.577-71.987L246.423 23.985c18.467-32.009 64.72-31.951 83.154 0l239.94 416.028zM288 354c-25.405 0-46 20.595-46 46s20.595 46 46 46 46-20.595 46-46-20.595-46-46-46zm-43.673-165.346l7.418 136c.347 6.364 5.609 11.346 11.982 11.346h48.546c6.373 0 11.635-4.982 11.982-11.346l7.418-136c.375-6.874-5.098-12.654-11.982-12.654h-63.383c-6.884 0-12.356 5.78-11.981 12.654z"/></svg>
<div class="t" style="left:343px;top:613px;font-size:14px;color:#fff;font-weight:400;">1,107</div>
<div class="t" style="left:433px;top:613px;font-size:14px;color:#fff;font-weight:400;">ET MALWARE Generic gate[.].php GET with minimal headers</div>
<div class="t" style="left:1129px;top:613px;font-size:14px;color:#fff;font-weight:400;">suricata</div>
<div class="t" style="left:1266px;top:613px;font-size:14px;color:#fff;font-weight:400;">high</div>
<div class="bx" style="left:209px;top:668px;width:1219px;height:1px;background:#444"></div>
<svg class="ic" style="left:235px;top:644.5px;width:15.75px;height:18px;fill:#ffb300" viewBox="0 0 448 512" preserveAspectRatio="none"><path d="M224 512c35.32 0 63.97-28.65 63.97-64H160.03c0 35.35 28.65 64 63.97 64zm215.39-149.71c-19.32-20.76-55.47-51.99-55.47-154.29 0-77.7-54.48-139.9-127.94-155.16V32c0-17.67-14.32-32-31.98-32s-31.98 14.33-31.98 32v20.84C118.56 68.1 64.08 130.3 64.08 208c0 102.3-36.15 133.53-55.47 154.29-6 6.45-8.66 14.16-8.61 21.71.11 16.4 12.98 32 32.1 32h383.8c19.12 0 32-15.6 32.1-32 .05-7.55-2.61-15.27-8.61-21.71z"/></svg>
<svg class="ic" style="left:272px;top:644.5px;width:20.25px;height:18px;fill:#2196f3" viewBox="0 0 576 512" preserveAspectRatio="none"><path d="M569.517 440.013C587.975 472.007 564.806 512 527.94 512H48.054c-36.937 0-59.999-40.055-41.577-71.987L246.423 23.985c18.467-32.009 64.72-31.951 83.154 0l239.94 416.028zM288 354c-25.405 0-46 20.595-46 46s20.595 46 46 46 46-20.595 46-46-20.595-46-46-46zm-43.673-165.346l7.418 136c.347 6.364 5.609 11.346 11.982 11.346h48.546c6.373 0 11.635-4.982 11.982-11.346l7.418-136c.375-6.874-5.098-12.654-11.982-12.654h-63.383c-6.884 0-12.356 5.78-11.981 12.654z"/></svg>
<div class="t" style="left:343px;top:645px;font-size:14px;color:#fff;font-weight:400;">1,053</div>
<div class="t" style="left:433px;top:645px;font-size:14px;color:#fff;font-weight:400;">GPL SNMP public access udp</div>
<div class="t" style="left:1129px;top:645px;font-size:14px;color:#fff;font-weight:400;">suricata</div>
<div class="t" style="left:1266px;top:645px;font-size:14px;color:#fff;font-weight:400;">medium</div>
<div class="bx" style="left:209px;top:669px;width:1219px;height:31px;background:#252525"></div>
<div class="bx" style="left:209px;top:700px;width:1219px;height:1px;background:#444"></div>
<svg class="ic" style="left:235px;top:676.5px;width:15.75px;height:18px;fill:#ffeb3b" viewBox="0 0 448 512" preserveAspectRatio="none"><path d="M224 512c35.32 0 63.97-28.65 63.97-64H160.03c0 35.35 28.65 64 63.97 64zm215.39-149.71c-19.32-20.76-55.47-51.99-55.47-154.29 0-77.7-54.48-139.9-127.94-155.16V32c0-17.67-14.32-32-31.98-32s-31.98 14.33-31.98 32v20.84C118.56 68.1 64.08 130.3 64.08 208c0 102.3-36.15 133.53-55.47 154.29-6 6.45-8.66 14.16-8.61 21.71.11 16.4 12.98 32 32.1 32h383.8c19.12 0 32-15.6 32.1-32 .05-7.55-2.61-15.27-8.61-21.71z"/></svg>
<svg class="ic" style="left:272px;top:676.5px;width:20.25px;height:18px;fill:#2196f3" viewBox="0 0 576 512" preserveAspectRatio="none"><path d="M569.517 440.013C587.975 472.007 564.806 512 527.94 512H48.054c-36.937 0-59.999-40.055-41.577-71.987L246.423 23.985c18.467-32.009 64.72-31.951 83.154 0l239.94 416.028zM288 354c-25.405 0-46 20.595-46 46s20.595 46 46 46 46-20.595 46-46-20.595-46-46-46zm-43.673-165.346l7.418 136c.347 6.364 5.609 11.346 11.982 11.346h48.546c6.373 0 11.635-4.982 11.982-11.346l7.418-136c.375-6.874-5.098-12.654-11.982-12.654h-63.383c-6.884 0-12.356 5.78-11.981 12.654z"/></svg>
<div class="t" style="left:343px;top:677px;font-size:14px;color:#fff;font-weight:400;">891</div>
<div class="t" style="left:433px;top:677px;font-size:14px;color:#fff;font-weight:400;">GPL NETBIOS SMB-DS IPC$ unicode share access</div>
<div class="t" style="left:1129px;top:677px;font-size:14px;color:#fff;font-weight:400;">suricata</div>
<div class="t" style="left:1266px;top:677px;font-size:14px;color:#fff;font-weight:400;">low</div>
<div class="bx" style="left:209px;top:732px;width:1219px;height:1px;background:#444"></div>
<svg class="ic" style="left:235px;top:708.5px;width:15.75px;height:18px;fill:#e53935" viewBox="0 0 448 512" preserveAspectRatio="none"><path d="M224 512c35.32 0 63.97-28.65 63.97-64H160.03c0 35.35 28.65 64 63.97 64zm215.39-149.71c-19.32-20.76-55.47-51.99-55.47-154.29 0-77.7-54.48-139.9-127.94-155.16V32c0-17.67-14.32-32-31.98-32s-31.98 14.33-31.98 32v20.84C118.56 68.1 64.08 130.3 64.08 208c0 102.3-36.15 133.53-55.47 154.29-6 6.45-8.66 14.16-8.61 21.71.11 16.4 12.98 32 32.1 32h383.8c19.12 0 32-15.6 32.1-32 .05-7.55-2.61-15.27-8.61-21.71z"/></svg>
<svg class="ic" style="left:272px;top:708.5px;width:20.25px;height:18px;fill:#2196f3" viewBox="0 0 576 512" preserveAspectRatio="none"><path d="M569.517 440.013C587.975 472.007 564.806 512 527.94 512H48.054c-36.937 0-59.999-40.055-41.577-71.987L246.423 23.985c18.467-32.009 64.72-31.951 83.154 0l239.94 416.028zM288 354c-25.405 0-46 20.595-46 46s20.595 46 46 46 46-20.595 46-46-20.595-46-46-46zm-43.673-165.346l7.418 136c.347 6.364 5.609 11.346 11.982 11.346h48.546c6.373 0 11.635-4.982 11.982-11.346l7.418-136c.375-6.874-5.098-12.654-11.982-12.654h-63.383c-6.884 0-12.356 5.78-11.981 12.654z"/></svg>
<div class="t" style="left:343px;top:709px;font-size:14px;color:#fff;font-weight:400;">518</div>
<div class="t" style="left:433px;top:709px;font-size:14px;color:#fff;font-weight:400;">ET EXPLOIT_KIT Fiesta URI Struct</div>
<div class="t" style="left:1129px;top:709px;font-size:14px;color:#fff;font-weight:400;">suricata</div>
<div class="t" style="left:1266px;top:709px;font-size:14px;color:#fff;font-weight:400;">high</div>
<div class="bx" style="left:209px;top:733px;width:1219px;height:31px;background:#252525"></div>
<div class="bx" style="left:209px;top:764px;width:1219px;height:1px;background:#444"></div>
<svg class="ic" style="left:235px;top:740.5px;width:15.75px;height:18px;fill:#e53935" viewBox="0 0 448 512" preserveAspectRatio="none"><path d="M224 512c35.32 0 63.97-28.65 63.97-64H160.03c0 35.35 28.65 64 63.97 64zm215.39-149.71c-19.32-20.76-55.47-51.99-55.47-154.29 0-77.7-54.48-139.9-127.94-155.16V32c0-17.67-14.32-32-31.98-32s-31.98 14.33-31.98 32v20.84C118.56 68.1 64.08 130.3 64.08 208c0 102.3-36.15 133.53-55.47 154.29-6 6.45-8.66 14.16-8.61 21.71.11 16.4 12.98 32 32.1 32h383.8c19.12 0 32-15.6 32.1-32 .05-7.55-2.61-15.27-8.61-21.71z"/></svg>
<svg class="ic" style="left:272px;top:740.5px;width:20.25px;height:18px;fill:#2196f3" viewBox="0 0 576 512" preserveAspectRatio="none"><path d="M569.517 440.013C587.975 472.007 564.806 512 527.94 512H48.054c-36.937 0-59.999-40.055-41.577-71.987L246.423 23.985c18.467-32.009 64.72-31.951 83.154 0l239.94 416.028zM288 354c-25.405 0-46 20.595-46 46s20.595 46 46 46 46-20.595 46-46-20.595-46-46-46zm-43.673-165.346l7.418 136c.347 6.364 5.609 11.346 11.982 11.346h48.546c6.373 0 11.635-4.982 11.982-11.346l7.418-136c.375-6.874-5.098-12.654-11.982-12.654h-63.383c-6.884 0-12.356 5.78-11.981 12.654z"/></svg>
<div class="t" style="left:343px;top:741px;font-size:14px;color:#fff;font-weight:400;">486</div>
<div class="t" style="left:433px;top:741px;font-size:14px;color:#fff;font-weight:400;">ET POLICY PE EXE or DLL Windows file download HTTP</div>
<div class="t" style="left:1129px;top:741px;font-size:14px;color:#fff;font-weight:400;">suricata</div>
<div class="t" style="left:1266px;top:741px;font-size:14px;color:#fff;font-weight:400;">high</div>
<div class="bx" style="left:209px;top:796px;width:1219px;height:1px;background:#444"></div>
<svg class="ic" style="left:235px;top:772.5px;width:15.75px;height:18px;fill:#ffeb3b" viewBox="0 0 448 512" preserveAspectRatio="none"><path d="M224 512c35.32 0 63.97-28.65 63.97-64H160.03c0 35.35 28.65 64 63.97 64zm215.39-149.71c-19.32-20.76-55.47-51.99-55.47-154.29 0-77.7-54.48-139.9-127.94-155.16V32c0-17.67-14.32-32-31.98-32s-31.98 14.33-31.98 32v20.84C118.56 68.1 64.08 130.3 64.08 208c0 102.3-36.15 133.53-55.47 154.29-6 6.45-8.66 14.16-8.61 21.71.11 16.4 12.98 32 32.1 32h383.8c19.12 0 32-15.6 32.1-32 .05-7.55-2.61-15.27-8.61-21.71z"/></svg>
<svg class="ic" style="left:272px;top:772.5px;width:20.25px;height:18px;fill:#2196f3" viewBox="0 0 576 512" preserveAspectRatio="none"><path d="M569.517 440.013C587.975 472.007 564.806 512 527.94 512H48.054c-36.937 0-59.999-40.055-41.577-71.987L246.423 23.985c18.467-32.009 64.72-31.951 83.154 0l239.94 416.028zM288 354c-25.405 0-46 20.595-46 46s20.595 46 46 46 46-20.595 46-46-20.595-46-46-46zm-43.673-165.346l7.418 136c.347 6.364 5.609 11.346 11.982 11.346h48.546c6.373 0 11.635-4.982 11.982-11.346l7.418-136c.375-6.874-5.098-12.654-11.982-12.654h-63.383c-6.884 0-12.356 5.78-11.981 12.654z"/></svg>
<div class="t" style="left:343px;top:773px;font-size:14px;color:#fff;font-weight:400;">486</div>
<div class="t" style="left:433px;top:773px;font-size:14px;color:#fff;font-weight:400;">GPL NETBIOS SMB-DS Session Setup NTMLSSP unicode asn1 overflow attempt</div>
<div class="t" style="left:1129px;top:773px;font-size:14px;color:#fff;font-weight:400;">suricata</div>
<div class="t" style="left:1266px;top:773px;font-size:14px;color:#fff;font-weight:400;">low</div>
<div class="bx" style="left:209px;top:797px;width:1219px;height:31px;background:#252525"></div>
<div class="bx" style="left:209px;top:828px;width:1219px;height:1px;background:#444"></div>
<svg class="ic" style="left:235px;top:804.5px;width:15.75px;height:18px;fill:#ffeb3b" viewBox="0 0 448 512" preserveAspectRatio="none"><path d="M224 512c35.32 0 63.97-28.65 63.97-64H160.03c0 35.35 28.65 64 63.97 64zm215.39-149.71c-19.32-20.76-55.47-51.99-55.47-154.29 0-77.7-54.48-139.9-127.94-155.16V32c0-17.67-14.32-32-31.98-32s-31.98 14.33-31.98 32v20.84C118.56 68.1 64.08 130.3 64.08 208c0 102.3-36.15 133.53-55.47 154.29-6 6.45-8.66 14.16-8.61 21.71.11 16.4 12.98 32 32.1 32h383.8c19.12 0 32-15.6 32.1-32 .05-7.55-2.61-15.27-8.61-21.71z"/></svg>
<svg class="ic" style="left:272px;top:804.5px;width:20.25px;height:18px;fill:#2196f3" viewBox="0 0 576 512" preserveAspectRatio="none"><path d="M569.517 440.013C587.975 472.007 564.806 512 527.94 512H48.054c-36.937 0-59.999-40.055-41.577-71.987L246.423 23.985c18.467-32.009 64.72-31.951 83.154 0l239.94 416.028zM288 354c-25.405 0-46 20.595-46 46s20.595 46 46 46 46-20.595 46-46-20.595-46-46-46zm-43.673-165.346l7.418 136c.347 6.364 5.609 11.346 11.982 11.346h48.546c6.373 0 11.635-4.982 11.982-11.346l7.418-136c.375-6.874-5.098-12.654-11.982-12.654h-63.383c-6.884 0-12.356 5.78-11.981 12.654z"/></svg>
<div class="t" style="left:343px;top:805px;font-size:14px;color:#fff;font-weight:400;">448</div>
<div class="t" style="left:433px;top:805px;font-size:14px;color:#fff;font-weight:400;">ET JA3 Hash - Possible Malware - Dridex</div>
<div class="t" style="left:1129px;top:805px;font-size:14px;color:#fff;font-weight:400;">suricata</div>
<div class="t" style="left:1266px;top:805px;font-size:14px;color:#fff;font-weight:400;">low</div>
<div class="bx" style="left:209px;top:860px;width:1219px;height:1px;background:#444"></div>
<svg class="ic" style="left:235px;top:836.5px;width:15.75px;height:18px;fill:#e53935" viewBox="0 0 448 512" preserveAspectRatio="none"><path d="M224 512c35.32 0 63.97-28.65 63.97-64H160.03c0 35.35 28.65 64 63.97 64zm215.39-149.71c-19.32-20.76-55.47-51.99-55.47-154.29 0-77.7-54.48-139.9-127.94-155.16V32c0-17.67-14.32-32-31.98-32s-31.98 14.33-31.98 32v20.84C118.56 68.1 64.08 130.3 64.08 208c0 102.3-36.15 133.53-55.47 154.29-6 6.45-8.66 14.16-8.61 21.71.11 16.4 12.98 32 32.1 32h383.8c19.12 0 32-15.6 32.1-32 .05-7.55-2.61-15.27-8.61-21.71z"/></svg>
<svg class="ic" style="left:272px;top:836.5px;width:20.25px;height:18px;fill:#2196f3" viewBox="0 0 576 512" preserveAspectRatio="none"><path d="M569.517 440.013C587.975 472.007 564.806 512 527.94 512H48.054c-36.937 0-59.999-40.055-41.577-71.987L246.423 23.985c18.467-32.009 64.72-31.951 83.154 0l239.94 416.028zM288 354c-25.405 0-46 20.595-46 46s20.595 46 46 46 46-20.595 46-46-20.595-46-46-46zm-43.673-165.346l7.418 136c.347 6.364 5.609 11.346 11.982 11.346h48.546c6.373 0 11.635-4.982 11.982-11.346l7.418-136c.375-6.874-5.098-12.654-11.982-12.654h-63.383c-6.884 0-12.356 5.78-11.981 12.654z"/></svg>
<div class="t" style="left:343px;top:837px;font-size:14px;color:#fff;font-weight:400;">448</div>
<div class="t" style="left:433px;top:837px;font-size:14px;color:#fff;font-weight:400;">ET MALWARE Possible Dyre SSL Cert (fake state)</div>
<div class="t" style="left:1129px;top:837px;font-size:14px;color:#fff;font-weight:400;">suricata</div>
<div class="t" style="left:1266px;top:837px;font-size:14px;color:#fff;font-weight:400;">high</div>
<div class="bx" style="left:209px;top:861px;width:1219px;height:31px;background:#252525"></div>
<div class="bx" style="left:209px;top:892px;width:1219px;height:1px;background:#444"></div>
<svg class="ic" style="left:235px;top:868.5px;width:15.75px;height:18px;fill:#ffb300" viewBox="0 0 448 512" preserveAspectRatio="none"><path d="M224 512c35.32 0 63.97-28.65 63.97-64H160.03c0 35.35 28.65 64 63.97 64zm215.39-149.71c-19.32-20.76-55.47-51.99-55.47-154.29 0-77.7-54.48-139.9-127.94-155.16V32c0-17.67-14.32-32-31.98-32s-31.98 14.33-31.98 32v20.84C118.56 68.1 64.08 130.3 64.08 208c0 102.3-36.15 133.53-55.47 154.29-6 6.45-8.66 14.16-8.61 21.71.11 16.4 12.98 32 32.1 32h383.8c19.12 0 32-15.6 32.1-32 .05-7.55-2.61-15.27-8.61-21.71z"/></svg>
<svg class="ic" style="left:272px;top:868.5px;width:20.25px;height:18px;fill:#2196f3" viewBox="0 0 576 512" preserveAspectRatio="none"><path d="M569.517 440.013C587.975 472.007 564.806 512 527.94 512H48.054c-36.937 0-59.999-40.055-41.577-71.987L246.423 23.985c18.467-32.009 64.72-31.951 83.154 0l239.94 416.028zM288 354c-25.405 0-46 20.595-46 46s20.595 46 46 46 46-20.595 46-46-20.595-46-46-46zm-43.673-165.346l7.418 136c.347 6.364 5.609 11.346 11.982 11.346h48.546c6.373 0 11.635-4.982 11.982-11.346l7.418-136c.375-6.874-5.098-12.654-11.982-12.654h-63.383c-6.884 0-12.356 5.78-11.981 12.654z"/></svg>
<div class="t" style="left:343px;top:869px;font-size:14px;color:#fff;font-weight:400;">433</div>
<div class="t" style="left:433px;top:869px;font-size:14px;color:#fff;font-weight:400;">ET HUNTING GENERIC SUSPICIOUS POST to Dotted Quad with Fake Browser 1</div>
<div class="t" style="left:1129px;top:869px;font-size:14px;color:#fff;font-weight:400;">suricata</div>
<div class="t" style="left:1266px;top:869px;font-size:14px;color:#fff;font-weight:400;">medium</div>
<div class="bx" style="left:209px;top:924px;width:1219px;height:1px;background:#444"></div>
<svg class="ic" style="left:235px;top:900.5px;width:15.75px;height:18px;fill:#e53935" viewBox="0 0 448 512" preserveAspectRatio="none"><path d="M224 512c35.32 0 63.97-28.65 63.97-64H160.03c0 35.35 28.65 64 63.97 64zm215.39-149.71c-19.32-20.76-55.47-51.99-55.47-154.29 0-77.7-54.48-139.9-127.94-155.16V32c0-17.67-14.32-32-31.98-32s-31.98 14.33-31.98 32v20.84C118.56 68.1 64.08 130.3 64.08 208c0 102.3-36.15 133.53-55.47 154.29-6 6.45-8.66 14.16-8.61 21.71.11 16.4 12.98 32 32.1 32h383.8c19.12 0 32-15.6 32.1-32 .05-7.55-2.61-15.27-8.61-21.71z"/></svg>
<svg class="ic" style="left:272px;top:900.5px;width:20.25px;height:18px;fill:#2196f3" viewBox="0 0 576 512" preserveAspectRatio="none"><path d="M569.517 440.013C587.975 472.007 564.806 512 527.94 512H48.054c-36.937 0-59.999-40.055-41.577-71.987L246.423 23.985c18.467-32.009 64.72-31.951 83.154 0l239.94 416.028zM288 354c-25.405 0-46 20.595-46 46s20.595 46 46 46 46-20.595 46-46-20.595-46-46-46zm-43.673-165.346l7.418 136c.347 6.364 5.609 11.346 11.982 11.346h48.546c6.373 0 11.635-4.982 11.982-11.346l7.418-136c.375-6.874-5.098-12.654-11.982-12.654h-63.383c-6.884 0-12.356 5.78-11.981 12.654z"/></svg>
<div class="t" style="left:343px;top:901px;font-size:14px;color:#fff;font-weight:400;">351</div>
<div class="t" style="left:433px;top:901px;font-size:14px;color:#fff;font-weight:400;">ET MALWARE Amadey CnC Check-In</div>
<div class="t" style="left:1129px;top:901px;font-size:14px;color:#fff;font-weight:400;">suricata</div>
<div class="t" style="left:1266px;top:901px;font-size:14px;color:#fff;font-weight:400;">high</div>
<div class="bx" style="left:209px;top:925px;width:1219px;height:31px;background:#252525"></div>
<div class="bx" style="left:209px;top:956px;width:1219px;height:1px;background:#444"></div>
<svg class="ic" style="left:235px;top:932.5px;width:15.75px;height:18px;fill:#ffb300" viewBox="0 0 448 512" preserveAspectRatio="none"><path d="M224 512c35.32 0 63.97-28.65 63.97-64H160.03c0 35.35 28.65 64 63.97 64zm215.39-149.71c-19.32-20.76-55.47-51.99-55.47-154.29 0-77.7-54.48-139.9-127.94-155.16V32c0-17.67-14.32-32-31.98-32s-31.98 14.33-31.98 32v20.84C118.56 68.1 64.08 130.3 64.08 208c0 102.3-36.15 133.53-55.47 154.29-6 6.45-8.66 14.16-8.61 21.71.11 16.4 12.98 32 32.1 32h383.8c19.12 0 32-15.6 32.1-32 .05-7.55-2.61-15.27-8.61-21.71z"/></svg>
<svg class="ic" style="left:272px;top:932.5px;width:20.25px;height:18px;fill:#2196f3" viewBox="0 0 576 512" preserveAspectRatio="none"><path d="M569.517 440.013C587.975 472.007 564.806 512 527.94 512H48.054c-36.937 0-59.999-40.055-41.577-71.987L246.423 23.985c18.467-32.009 64.72-31.951 83.154 0l239.94 416.028zM288 354c-25.405 0-46 20.595-46 46s20.595 46 46 46 46-20.595 46-46-20.595-46-46-46zm-43.673-165.346l7.418 136c.347 6.364 5.609 11.346 11.982 11.346h48.546c6.373 0 11.635-4.982 11.982-11.346l7.418-136c.375-6.874-5.098-12.654-11.982-12.654h-63.383c-6.884 0-12.356 5.78-11.981 12.654z"/></svg>
<div class="t" style="left:343px;top:933px;font-size:14px;color:#fff;font-weight:400;">270</div>
<div class="t" style="left:433px;top:933px;font-size:14px;color:#fff;font-weight:400;">ET POLICY External IP Lookup api.ipify.org</div>
<div class="t" style="left:1129px;top:933px;font-size:14px;color:#fff;font-weight:400;">suricata</div>
<div class="t" style="left:1266px;top:933px;font-size:14px;color:#fff;font-weight:400;">medium</div>
<div class="bx" style="left:0;top:0;width:1436px;height:63px;background:#12110e;box-shadow:0 2px 4px -1px rgba(0,0,0,.2),0 4px 5px 0 rgba(0,0,0,.14),0 1px 10px 0 rgba(0,0,0,.12)"></div>
<svg class="ic" style="left:17px;top:22px;width:15.75px;height:18px;fill:#fff" viewBox="0 0 448 512" preserveAspectRatio="none"><path d="M16 132h416c8.837 0 16-7.163 16-16V76c0-8.837-7.163-16-16-16H16C7.163 60 0 67.163 0 76v40c0 8.837 7.163 16 16 16zm0 160h416c8.837 0 16-7.163 16-16v-40c0-8.837-7.163-16-16-16H16c-8.837 0-16 7.163-16 16v40c0 8.837 7.163 16 16 16zm0 160h416c8.837 0 16-7.163 16-16v-40c0-8.837-7.163-16-16-16H16c-8.837 0-16 7.163-16 16v40c0 8.837 7.163 16 16 16z"/></svg>
<svg class="ic" style="left:60px;top:0;width:200px;height:60px" viewBox="60 0 200 60"><text x="69" y="43.3" font-family="Liberation Sans" font-size="31" fill="#fff" textLength="92" lengthAdjust="spacingAndGlyphs">Security</text><text x="199" y="42.5" font-family="Liberation Sans" font-size="31" fill="#fff" textLength="48.5" lengthAdjust="spacingAndGlyphs">nion</text></svg>
<svg class="ic" style="left:150px;top:0px;width:60px;height:55px" viewBox="150 0 60 55" fill="none" stroke-linecap="round"><path d="M182 16 Q181.5 20.5 187 21.6 A14.2 11.6 0 1 1 177 21.8 C181 21.5 188.8 24 188.8 32 A6.4 7.3 0 1 1 176 30 C176.5 26.5 182.5 26 183 31" stroke="#fff" stroke-width="2.2"/><path d="M190.6 15.2 A7.2 6.8 0 0 0 176.6 14.2" stroke="#2c8be6" stroke-width="2.1"/><path d="M173.5 12.8 L179.5 14.2 L176 18.6 Z" fill="#2c8be6"/></svg>
<svg class="ic" style="left:1400px;top:18px;width:24px;height:26px" viewBox="1400 18 24 26"><circle cx="1411.8" cy="26.4" r="4.7" fill="#fff"/><path d="M1404 38 C1404 34.2 1407.5 32.3 1412 32.3 C1416.5 32.3 1420 34.2 1420 38 L1420 38.6 Q1420 40.2 1418.4 40.2 L1405.6 40.2 Q1404 40.2 1404 38.6 Z" fill="#fff"/></svg>
<div class="bx" style="left:0;top:942px;width:1436px;height:41px;background:#12110e"></div>
<div class="t" style="left:13px;top:958px;font-size:12px;color:#fff;font-weight:400;letter-spacing:1.9px">VERSION: 2.3.20</div>
<div class="t" style="left:526px;top:958px;font-size:12px;color:#fff;letter-spacing:2px">&copy; 2020 <span style="color:#42a5f5">SECURITY ONION SOLUTIONS, LLC</span></div>
<div class="t" style="right:13px;top:958px;font-size:12px;color:#42a5f5;letter-spacing:2px">TERMS AND CONDITIONS</div>
</body></html>
